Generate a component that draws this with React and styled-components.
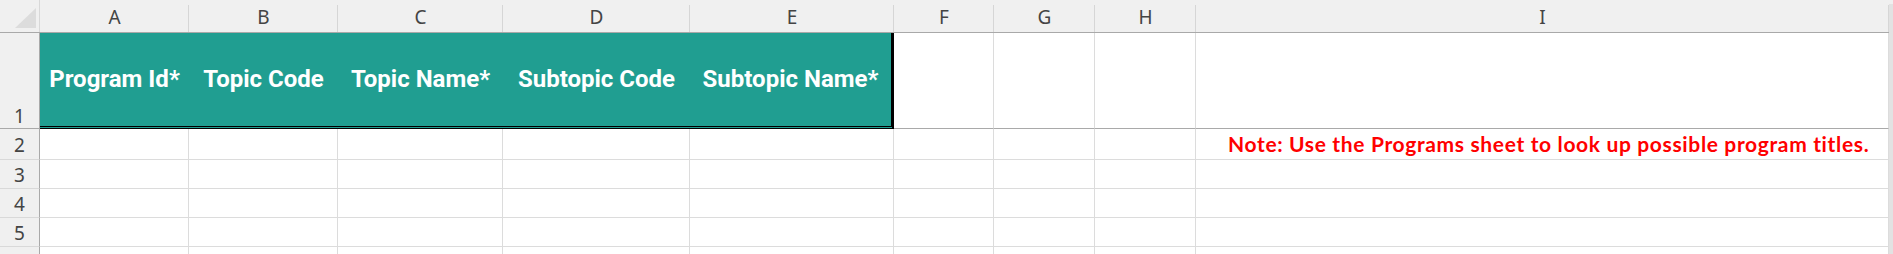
import React from 'react'
import styled, { createGlobalStyle } from 'styled-components'

const GlobalStyle = createGlobalStyle`
  html, body { margin: 0; padding: 0; background: #ffffff; }
  body { width: 1893px; height: 254px; overflow: hidden; }
`

const COLS = '40px 149px 149px 165px 187px 204px 100px 101px 101px 1fr'

const columns = ['A', 'B', 'C', 'D', 'E', 'F', 'G', 'H', 'I']
const headers = ['Program Id*', 'Topic Code', 'Topic Name*', 'Subtopic Code', 'Subtopic Name*']

const Page = styled.div`
  display: flex;
  width: 1893px;
  height: 254px;
  overflow: hidden;
  background: #f0f0f0;
`

const Sheet = styled.div`
  flex: 1;
  display: flex;
  flex-direction: column;
  overflow: hidden;
  background: #ffffff;
`

const Scrollbar = styled.div`
  width: 4px;
  margin-top: 4px;
  background: #e2e2e2;
`

const Row = styled.div`
  display: grid;
  grid-template-columns: ${COLS};
  height: ${p => p.$h}px;
  flex-shrink: 0;
`

const HeadRow = styled(Row)`
  background: #f0f0f0;
  border-bottom: 1px solid #a9a9a9;
  box-sizing: border-box;
`

const Corner = styled.div`
  display: flex;
  align-items: flex-end;
  justify-content: flex-end;
  padding: 0 3px 4px 0;
  box-sizing: border-box;
  border-right: 1px solid #d8d8d8;
`

const Triangle = styled.span`
  width: 21px;
  height: 20px;
  background: #dcdcdc;
  clip-path: polygon(100% 0, 100% 100%, 0 100%);
`

const ColHead = styled.div`
  display: flex;
  align-items: center;
  justify-content: center;
  font-family: "Noto Sans", "Open Sans", sans-serif;
  font-size: 19px;
  color: #444444;
  padding-top: 1px;
  box-sizing: border-box;
  background: linear-gradient(#d6d6d6, #d6d6d6) right 5px / 1px calc(100% - 5px) no-repeat;
`

const RowHead = styled.div`
  display: flex;
  align-items: ${p => (p.$bottom ? 'flex-end' : 'center')};
  justify-content: center;
  padding-bottom: ${p => (p.$bottom ? '2px' : '0')};
  padding-top: ${p => (p.$bottom ? '0' : '2px')};
  background: #f0f0f0;
  border-right: 1px solid #a9a9a9;
  border-bottom: 1px solid ${p => (p.$freeze ? '#a9a9a9' : '#d9d9d9')};
  box-sizing: border-box;
  font-family: "Noto Sans", "Open Sans", sans-serif;
  font-size: 19px;
  line-height: 1;
  color: #444444;
`

const Cell = styled.div`
  box-sizing: border-box;
  border-right: 1px solid #dcdcdc;
  border-bottom: 1px solid ${p => (p.$freeze ? '#a9a9a9' : '#dcdcdc')};
`

const TitleCell = styled.div`
  display: flex;
  align-items: center;
  justify-content: center;
  box-sizing: border-box;
  background: #209e91;
  border-bottom: 3px double #000000;
  border-right: ${p => (p.$last ? '3px solid #000000' : 'none')};
  padding-bottom: 2px;
  font-family: Roboto, "Liberation Sans", sans-serif;
  font-weight: 700;
  font-size: 24px;
  color: #ffffff;
  white-space: nowrap;
`

const NoteCell = styled(Cell)`
  display: flex;
  align-items: flex-end;
  padding: 0 0 3px 32px;
  font-family: Lato, "Liberation Sans", sans-serif;
  font-weight: 700;
  font-size: 21px;
  letter-spacing: 0.65px;
  line-height: 1.2;
  color: #ff0000;
  white-space: nowrap;
`

function App() {
  const rows = [
    { n: 2, h: 31, label: '2' },
    { n: 3, h: 29, label: '3' },
    { n: 4, h: 29, label: '4' },
    { n: 5, h: 29, label: '5' },
    { n: 6, h: 8, label: '' },
  ]

  return (
    <>
      <GlobalStyle />
      <Page>
        <Sheet>
          <HeadRow $h={33}>
            <Corner><Triangle /></Corner>
            {columns.map(c => <ColHead key={c}>{c}</ColHead>)}
          </HeadRow>

          <Row $h={96}>
            <RowHead $bottom $freeze>1</RowHead>
            {headers.map((t, i) => (
              <TitleCell key={t} $last={i === headers.length - 1}>{t}</TitleCell>
            ))}
            <Cell $freeze />
            <Cell $freeze />
            <Cell $freeze />
            <Cell $freeze />
          </Row>

          {rows.map(r => (
            <Row key={r.n} $h={r.h}>
              <RowHead>{r.label}</RowHead>
              {columns.slice(0, 8).map(c => <Cell key={c} />)}
              {r.n === 2
                ? <NoteCell>Note: Use the Programs sheet to look up possible program titles.</NoteCell>
                : <Cell />}
            </Row>
          ))}
        </Sheet>
        <Scrollbar />
      </Page>
    </>
  )
}

export default App
